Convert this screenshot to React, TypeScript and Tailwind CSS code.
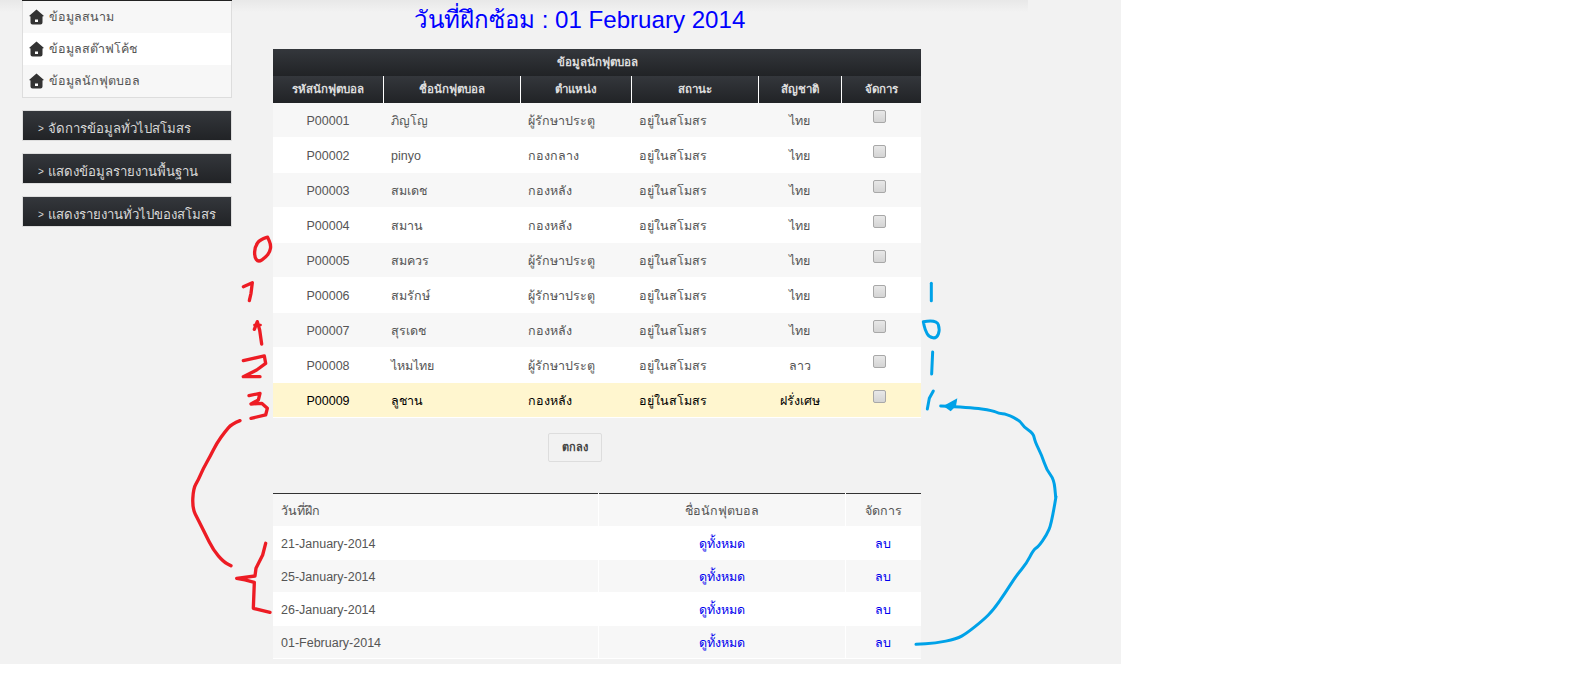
import React from 'react';

type Player = { id: string; name: string; pos: string; nation: string };

const players: Player[] = [
  { id: 'P00001', name: 'ภิญโญ', pos: 'ผู้รักษาประตู', nation: 'ไทย' },
  { id: 'P00002', name: 'pinyo', pos: 'กองกลาง', nation: 'ไทย' },
  { id: 'P00003', name: 'สมเดช', pos: 'กองหลัง', nation: 'ไทย' },
  { id: 'P00004', name: 'สมาน', pos: 'กองหลัง', nation: 'ไทย' },
  { id: 'P00005', name: 'สมควร', pos: 'ผู้รักษาประตู', nation: 'ไทย' },
  { id: 'P00006', name: 'สมรักษ์', pos: 'ผู้รักษาประตู', nation: 'ไทย' },
  { id: 'P00007', name: 'สุรเดช', pos: 'กองหลัง', nation: 'ไทย' },
  { id: 'P00008', name: 'ไหมไทย', pos: 'ผู้รักษาประตู', nation: 'ลาว' },
  { id: 'P00009', name: 'ลูชาน', pos: 'กองหลัง', nation: 'ฝรั่งเศษ' },
];

const dates = ['21-January-2014', '25-January-2014', '26-January-2014', '01-February-2014'];
const menus = ['จัดการข้อมูลทั่วไปสโมสร', 'แสดงข้อมูลรายงานพื้นฐาน', 'แสดงรายงานทั่วไปของสโมสร'];
const subItems = ['ข้อมูลสนาม', 'ข้อมูลสต๊าฟโค้ช', 'ข้อมูลนักฟุตบอล'];

function HomeIcon() {
  return (
    <svg width="15" height="16" viewBox="0 0 15 16" className="shrink-0">
      <path d="M7.5 0.5 L15 7 L13.5 7.5 L13.5 13.5 Q13.5 15.5 11.5 15.5 L3.5 15.5 Q1.5 15.5 1.5 13.5 L1.5 7.5 L0 7 Z" fill="#333333" />
      <rect x="6" y="10.5" width="3" height="2.5" fill="#ffffff" />
    </svg>
  );
}

// smooth=true rounds the corners by running through the midpoints
function Line({ points, color, width = 10, smooth = false }: { points: number[][]; color: string; width?: number; smooth?: boolean }) {
  let d = `M${points[0][0]} ${points[0][1]}`;
  for (let i = 1; i < points.length; i++) {
    const [x, y] = points[i];
    if (smooth && i < points.length - 1) {
      const [nx, ny] = points[i + 1];
      d += ` Q${x} ${y} ${(x + nx) / 2} ${(y + ny) / 2}`;
    } else {
      d += ` L${x} ${y}`;
    }
  }
  return <path d={d} fill="none" stroke={color} strokeWidth={width} strokeLinejoin="round" strokeLinecap="round" />;
}

// the hand-drawn marks sitting on top of the page, coordinates at 3x
function Scribbles() {
  const red = '#ed1c24';
  const blue = '#00a2e8';
  return (
    <svg className="absolute left-0 top-0 pointer-events-none" width="1584" height="687" viewBox="0 0 1584 687">
      <g transform="translate(225 230) scale(0.3333)">
        <Line smooth color={red} points={[[125, 22], [105, 28], [90, 50], [88, 80], [100, 97], [122, 82], [135, 65], [138, 45], [128, 22]]} />
        <Line color={red} points={[[55, 170], [82, 158], [78, 190], [73, 212]]} />
        <Line color={red} points={[[88, 298], [97, 275], [104, 300], [110, 342]]} />
        <Line color={red} points={[[88, 285], [107, 285]]} width={7} />
        <Line color={red} points={[[55, 392], [85, 385], [118, 378], [122, 400], [95, 420], [55, 440], [105, 440]]} />
        <Line color={red} points={[[72, 497], [105, 490], [100, 510], [78, 522], [110, 520], [127, 535], [122, 555], [78, 565]]} />
      </g>
      <g transform="translate(170 400) scale(0.3333)">
        <Line smooth color={red} points={[[210, 62], [185, 72], [165, 95], [140, 130], [120, 170], [100, 205], [85, 240], [70, 265], [67, 325], [85, 360], [105, 400], [130, 450], [160, 485], [183, 497]]} />
        <Line color={red} points={[[287, 430], [278, 465], [258, 505], [255, 528], [200, 535], [225, 540], [253, 547], [250, 625], [300, 637]]} />
      </g>
      <g transform="translate(840 260) scale(0.3333)">
        <Line color={blue} width={9} points={[[274, 70], [274, 122]]} />
        <Line smooth color={blue} width={9} points={[[250, 185], [290, 178], [300, 210], [290, 235], [268, 232], [255, 210], [250, 185]]} />
        <Line color={blue} width={9} points={[[278, 276], [275, 342]]} />
        <Line color={blue} width={9} points={[[280, 393], [268, 415], [262, 447]]} />
      </g>
      <g transform="translate(920 390) scale(0.3333)">
        <Line smooth color={blue} width={9} points={[[62, 48], [150, 52], [220, 62], [235, 70], [260, 72], [300, 92], [312, 112], [340, 130], [345, 155], [365, 195], [380, 240], [402, 268], [407, 320]]} />
        <polygon points="70,48 112,25 108,48 92,64" fill={blue} />
      </g>
      <g transform="translate(820 440) scale(0.3333)">
        <Line smooth color={blue} width={9} points={[[708, 170], [695, 250], [680, 285], [655, 320], [640, 330], [620, 370], [590, 405], [555, 460], [520, 510], [490, 540], [440, 580], [410, 597], [345, 610], [288, 613]]} />
      </g>
    </svg>
  );
}

export default function App() {
  const th = 'border-l border-white text-center font-bold text-[11.5px] text-[#dddddd] pt-px';
  return (
    <div className="relative w-[1584px] h-[687px] bg-white overflow-hidden font-['Tahoma','Liberation_Sans','Noto_Sans',sans-serif] text-[12.5px] text-[#555555]">
      <div className="relative flex w-[1121px] h-[664px] bg-[#f2f2f2]">
        <div className="absolute left-0 top-0 w-[1028px] h-3 bg-gradient-to-b from-[#e8e8e8] to-[#f2f2f2]" />

        {/* sidebar */}
        <div className="relative w-[210px] ml-[22px] shrink-0">
          <ul className="border border-t-0 border-[#dddddd]">
            <li className="h-px bg-[#222222] -mx-px" />
            {subItems.map((item, i) => (
              <li key={item} className={`flex items-center gap-[5px] pl-[6px] h-[32px] ${i === 1 ? 'bg-white' : 'bg-[#f7f7f7]'}`}>
                <HomeIcon />
                <span className="pt-px">{item}</span>
              </li>
            ))}
          </ul>
          <div className="mt-3 flex flex-col gap-3">
            {menus.map((m) => (
              <div key={m} className="flex items-center h-[31px] pl-[15px] pt-[7px] leading-[16px] whitespace-nowrap border border-[#dddddd] bg-gradient-to-b from-[#34373c] to-[#212326] text-[13.2px] text-[#d8d8d8]">
                <span className="mr-[4px] text-[10px]">&gt;</span>
                {m}
              </div>
            ))}
          </div>
        </div>

        {/* main */}
        <div className="relative ml-[41px] w-[648px] shrink-0">
          <h1 className="h-[49px] pl-[141px] pt-[5px] text-[24.1px] leading-[30px] font-normal text-[#0000ff]">
            วันที่ฝึกซ้อม : 01 February 2014
          </h1>

          <table className="w-[648px] table-fixed border-collapse">
            <colgroup>
              <col className="w-[110px]" />
              <col className="w-[137px]" />
              <col className="w-[111px]" />
              <col className="w-[127px]" />
              <col className="w-[83px]" />
              <col className="w-[80px]" />
            </colgroup>
            <thead>
              <tr className="h-[27px] bg-gradient-to-b from-[#34373c] to-[#212326]">
                <th colSpan={6} className="text-center font-bold text-[11.5px] text-[#dddddd] pt-px">ข้อมูลนักฟุตบอล</th>
              </tr>
              <tr className="h-[27px] bg-gradient-to-b from-[#34373c] to-[#212326]">
                <th className="text-center font-bold text-[11.5px] text-[#dddddd] pt-px">รหัสนักฟุตบอล</th>
                <th className={th}>ชื่อนักฟุตบอล</th>
                <th className={th}>ตำแหน่ง</th>
                <th className={th}>สถานะ</th>
                <th className={th}>สัญชาติ</th>
                <th className={th}>จัดการ</th>
              </tr>
            </thead>
            <tbody>
              {players.map((p, i) => {
                const last = i === players.length - 1;
                const bg = last ? 'bg-[#fff6cf] text-black' : i % 2 === 0 ? 'bg-[#f7f7f7]' : 'bg-white';
                return (
                  <tr key={p.id} className={`${i % 2 === 0 ? 'h-[34px]' : 'h-[36px]'} ${bg}`}>
                    <td className="text-center pt-[2px]">{p.id}</td>
                    <td className="pl-2 pt-[2px]">{p.name}</td>
                    <td className="pl-2 pt-[2px]">{p.pos}</td>
                    <td className="pl-2 pt-[2px]">อยู่ในสโมสร</td>
                    <td className="text-center pt-[2px]">{p.nation}</td>
                    <td className="text-center pb-[7px] pr-[3px]">
                      <input
                        type="checkbox"
                        className="appearance-none align-middle w-[13px] h-[13px] rounded-[2px] border border-[#a8a8a8] bg-gradient-to-b from-[#e8e8e8] to-[#d4d4d4]"
                      />
                    </td>
                  </tr>
                );
              })}
            </tbody>
          </table>
          <div className="h-px bg-white" />

          <div className="flex justify-start pl-[275px] pt-[15px] h-[75px]">
            <button className="w-[54px] h-[29px] rounded-[2px] border border-[#dddddd] bg-[#f2f2f2] text-[11px] font-bold text-[#444444]">
              ตกลง
            </button>
          </div>

          <table className="w-[648px] table-fixed border-collapse border-t border-[#333333]">
            <colgroup>
              <col className="w-[325px]" />
              <col className="w-[247px]" />
              <col className="w-[76px]" />
            </colgroup>
            <thead>
              <tr className="h-[32px] bg-[#f7f7f7]">
                <th className="pl-2 pt-[3px] text-left font-normal">วันที่ฝึก</th>
                <th className="border-l border-white pt-[3px] font-normal">ชื่อนักฟุตบอล</th>
                <th className="border-l border-white pt-[3px] font-normal">จัดการ</th>
              </tr>
            </thead>
            <tbody>
              {dates.map((d, i) => (
                <tr key={d} className={i % 2 === 0 ? 'h-[34px] bg-white' : 'h-[32px] bg-[#f7f7f7]'}>
                  <td className="pl-2 pt-[3px]">{d}</td>
                  <td className="border-l border-white pt-[3px] text-center text-[#0000ee]">ดูทั้งหมด</td>
                  <td className="border-l border-white pt-[3px] text-center text-[#0000ee]">ลบ</td>
                </tr>
              ))}
            </tbody>
          </table>
          <div className="h-px bg-white" />
        </div>
      </div>
      <Scribbles />
    </div>
  );
}
